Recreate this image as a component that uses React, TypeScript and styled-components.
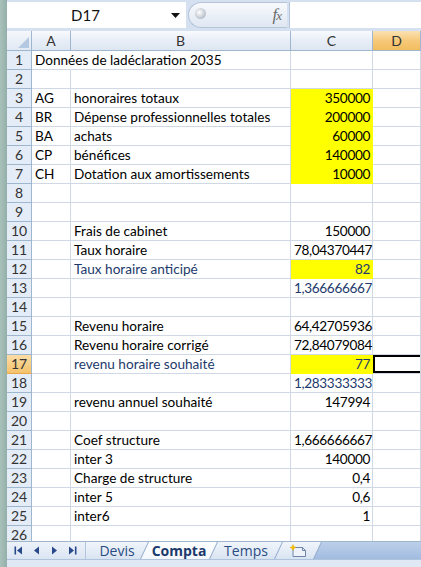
import React from 'react';
import styled, { createGlobalStyle, css } from 'styled-components';

const GlobalStyle = createGlobalStyle`
  html, body {
    margin: 0;
    padding: 0;
  }
  body {
    width: 421px;
    height: 567px;
    overflow: hidden;
    background: #fff;
    font-family: Lato, "Liberation Sans", sans-serif;
  }
`;

const Window = styled.div`
  display: flex;
  width: 421px;
  height: 567px;
  overflow: hidden;
`;

const SideStrip = styled.div`
  width: 7px;
  flex-shrink: 0;
  background: linear-gradient(to right, #a9c1bb, #94afa9);
`;

const Main = styled.div`
  flex: 1;
  min-width: 0;
  display: flex;
  flex-direction: column;
`;

/* formula bar */

const FormulaBar = styled.div`
  height: 31px;
  box-sizing: border-box;
  display: flex;
  padding: 2px 0 3px;
  gap: 2px;
  background: #d5e1f0;
`;

const NameBox = styled.div`
  width: 179px;
  display: flex;
  background: #fff;
`;

const NameText = styled.div`
  flex: 1;
  text-align: center;
  line-height: 26px;
  font-size: 15px;
  color: #111;
`;

const DropArrow = styled.div`
  width: 22px;
  display: flex;
  align-items: center;
  justify-content: center;
`;

const FxPill = styled.div`
  width: 99px;
  box-sizing: border-box;
  display: flex;
  align-items: center;
  justify-content: space-between;
  padding: 0 6px 0 6px;
  border: 1px solid #b4c4d9;
  border-right: none;
  border-radius: 13px 0 0 13px;
  background: linear-gradient(#f7f9fc, #dfe7f2);
`;

const Knob = styled.div`
  width: 11px;
  height: 11px;
  border-radius: 50%;
  margin-top: -4px;
  background: radial-gradient(circle at 40% 40%, #ffffff, #b8c0ca 70%);
`;

const Fx = styled.span`
  font-family: "Liberation Serif", serif;
  font-style: italic;
  font-size: 17px;
  color: #6b6b6b;
  letter-spacing: -1px;

  small {
    font-size: 13px;
  }
`;

const FormulaInput = styled.div`
  flex: 1;
  background: #fff;
  border-left: 1px solid #b4c4d9;
`;

/* sheet */

const Sheet = styled.div`
  height: 510px;
  overflow: hidden;
  display: grid;
  grid-template-columns: 25px 39px 220px 82px 1fr;
  grid-template-rows: 20px;
  grid-auto-rows: 19px;
`;

const headBase = css`
  box-sizing: border-box;
  border-right: 1px solid #9eb6ce;
  border-bottom: 1px solid #9eb6ce;
  font-size: 14px;
  color: #333;
  text-align: center;
`;

const Corner = styled.div`
  ${headBase};
  display: flex;
  align-items: flex-end;
  justify-content: flex-end;
  padding: 0 2px 2px 0;
  background: linear-gradient(#f4f7fb, #e1e9f4);
`;

const ColHead = styled.div<{ $active?: boolean }>`
  ${headBase};
  line-height: 19px;
  background: ${(p) =>
    p.$active
      ? 'linear-gradient(#fbe2b4, #f6c97a 50%, #f2bd5e)'
      : 'linear-gradient(#f8fafd, #e8eef7 50%, #dde6f1)'};
`;

const RowHead = styled.div<{ $active?: boolean }>`
  ${headBase};
  line-height: 18px;
  background: ${(p) =>
    p.$active ? 'linear-gradient(#fbdca6, #f4c26a)' : '#e4ecf7'};
  border-bottom-color: ${(p) => (p.$active ? '#e9a84c' : '#9eb6ce')};
`;

const Cell = styled.div<{
  $fill?: boolean;
  $blue?: boolean;
  $num?: boolean;
  $spill?: boolean;
  $selected?: boolean;
}>`
  box-sizing: border-box;
  padding: 0 2px 0 3px;
  border-right: 1px solid
    ${(p) => (p.$spill ? 'transparent' : p.$fill ? '#ffff00' : '#d0d7e5')};
  border-bottom: 1px solid ${(p) => (p.$fill ? '#ffff00' : '#d0d7e5')};
  line-height: 18px;
  font-size: 13.6px;
  letter-spacing: ${(p) => (p.$num ? '-0.35px' : '0')};
  white-space: nowrap;
  overflow: visible;
  color: ${(p) => (p.$blue ? '#1d3a6b' : '#000')};
  text-align: ${(p) => (p.$num ? 'right' : 'left')};
  background: ${(p) => (p.$fill ? '#ffff00' : 'transparent')};
  ${(p) =>
    p.$selected &&
    css`
      box-shadow: inset 2px 2px 0 #000, inset 0 -2px 0 #000;
    `}
`;

/* sheet tabs */

const TabBar = styled.div`
  height: 18px;
  box-sizing: border-box;
  display: flex;
  border-top: 1px solid #9eb6ce;
  background: linear-gradient(#edf2f9, #dbe5f2);
`;

const NavButtons = styled.div`
  width: 79px;
  flex-shrink: 0;
  box-sizing: border-box;
  display: flex;
  align-items: center;
  gap: 9px;
  padding-left: 7px;
  border-right: 1px solid #b3c5dd;
`;

const TabStrip = styled.div`
  flex: 1;
  display: flex;
  background: #8ea8cb;
`;

const Tab = styled.div<{ $active?: boolean; $first?: boolean; $w: number }>`
  width: ${(p) => p.$w}px;
  flex-shrink: 0;
  margin-left: ${(p) => (p.$first ? 0 : -7)}px;
  display: flex;
  align-items: center;
  justify-content: center;
  font-family: "Open Sans", "DejaVu Sans", sans-serif;
  font-size: 14px;
  line-height: 17px;
  font-weight: ${(p) => (p.$active ? 700 : 400)};
  color: ${(p) => (p.$active ? '#1b3a6c' : '#2a4c82')};
  background: ${(p) =>
    p.$active
      ? 'linear-gradient(#ffffff, #f3f6fb)'
      : 'linear-gradient(#f1f5fb, #d9e4f2)'};
  clip-path: ${(p) =>
    p.$first
      ? 'polygon(0 0, 100% 0, calc(100% - 8px) 100%, 0 100%)'
      : 'polygon(8px 0, 100% 0, calc(100% - 8px) 100%, 0 100%)'};
`;

const TabFiller = styled.div`
  flex: 1;
  margin-left: -7px;
  background: linear-gradient(#bccfe9, #a2bce0);
  clip-path: polygon(8px 0, 100% 0, 100% 100%, 0 100%);
`;

const StatusBar = styled.div`
  height: 8px;
  box-sizing: border-box;
  border-top: 1px solid #b0c3dc;
  background: #dfe8f4;
`;

type RowData = {
  a?: string;
  b?: string;
  c?: string;
  fill?: boolean;
  blueB?: boolean;
  blueC?: boolean;
};

const rows: RowData[] = [
  { a: 'Données de ladéclaration 2035' },
  {},
  { a: 'AG', b: 'honoraires totaux', c: '350000', fill: true },
  { a: 'BR', b: 'Dépense professionnelles totales', c: '200000', fill: true },
  { a: 'BA', b: 'achats', c: '60000', fill: true },
  { a: 'CP', b: 'bénéfices', c: '140000', fill: true },
  { a: 'CH', b: 'Dotation aux amortissements', c: '10000', fill: true },
  {},
  {},
  { b: 'Frais de cabinet', c: '150000' },
  { b: 'Taux horaire', c: '78,04370447' },
  { b: 'Taux horaire anticipé', c: '82', fill: true, blueB: true, blueC: true },
  { c: '1,366666667', blueC: true },
  {},
  { b: 'Revenu horaire', c: '64,42705936' },
  { b: 'Revenu horaire corrigé', c: '72,84079084' },
  { b: 'revenu horaire souhaité', c: '77', fill: true, blueB: true, blueC: true },
  { c: '1,283333333', blueC: true },
  { b: 'revenu annuel souhaité', c: '147994' },
  {},
  { b: 'Coef structure', c: '1,666666667' },
  { b: 'inter 3', c: '140000' },
  { b: 'Charge de structure', c: '0,4' },
  { b: 'inter 5', c: '0,6' },
  { b: 'inter6', c: '1' },
  {},
];

const ACTIVE_ROW = 17;

const NavIcon: React.FC<{ kind: 'first' | 'prev' | 'next' | 'last' }> = ({ kind }) => {
  const color = '#28498a';
  const flip = kind === 'next' || kind === 'last';
  const bar = kind === 'first' || kind === 'last';
  return (
    <svg width="9" height="9" viewBox="0 0 9 9" style={{ transform: flip ? 'scaleX(-1)' : undefined }}>
      {bar && <rect x="0.5" y="0.5" width="1.6" height="8" fill={color} />}
      <polygon points={bar ? '8,0.5 3,4.5 8,8.5' : '7,0.5 2,4.5 7,8.5'} fill={color} />
    </svg>
  );
};

const InsertSheetIcon = () => (
  <svg width="18" height="14" viewBox="0 0 18 14">
    <path d="M4 3.5 H13.5 L16.5 6.5 V12.5 H4 Z" fill="#eef3fa" stroke="#6f86a8" strokeWidth="1" />
    <path d="M13.5 3.5 V6.5 H16.5" fill="none" stroke="#6f86a8" strokeWidth="1" />
    <path d="M4 0.5 L4.9 2.6 L7 3.5 L4.9 4.4 L4 6.5 L3.1 4.4 L1 3.5 L3.1 2.6 Z" fill="#f6c200" stroke="#e3a400" strokeWidth="0.4" />
  </svg>
);

const App: React.FC = () => {
  return (
    <>
      <GlobalStyle />
      <Window>
        <SideStrip />
        <Main>
          <FormulaBar>
            <NameBox>
              <NameText>D17</NameText>
              <DropArrow>
                <svg width="9" height="5" viewBox="0 0 9 5">
                  <polygon points="0,0 9,0 4.5,5" fill="#111" />
                </svg>
              </DropArrow>
            </NameBox>
            <FxPill>
              <Knob />
              <Fx>
                f<small>x</small>
              </Fx>
            </FxPill>
            <FormulaInput />
          </FormulaBar>

          <Sheet>
            <Corner>
              <svg width="11" height="11" viewBox="0 0 11 11">
                <polygon points="11,0 11,11 0,11" fill="#b5c8e1" />
              </svg>
            </Corner>
            <ColHead>A</ColHead>
            <ColHead>B</ColHead>
            <ColHead>C</ColHead>
            <ColHead $active>D</ColHead>

            {rows.map((r, i) => {
              const n = i + 1;
              const spill = !!r.a && r.a.length > 5 && !r.b;
              return (
                <React.Fragment key={n}>
                  <RowHead $active={n === ACTIVE_ROW}>{n}</RowHead>
                  <Cell $spill={spill}>{r.a}</Cell>
                  <Cell $blue={r.blueB}>{r.b}</Cell>
                  <Cell $num $fill={r.fill} $blue={r.blueC}>
                    {r.c}
                  </Cell>
                  <Cell $selected={n === ACTIVE_ROW} />
                </React.Fragment>
              );
            })}
          </Sheet>

          <TabBar>
            <NavButtons>
              <NavIcon kind="first" />
              <NavIcon kind="prev" />
              <NavIcon kind="next" />
              <NavIcon kind="last" />
            </NavButtons>
            <TabStrip>
              <Tab $first $w={62}>Devis</Tab>
              <Tab $active $w={76}>Compta</Tab>
              <Tab $w={72}>Temps</Tab>
              <Tab $w={46}>
                <InsertSheetIcon />
              </Tab>
              <TabFiller />
            </TabStrip>
          </TabBar>
          <StatusBar />
        </Main>
      </Window>
    </>
  );
};

export default App;
